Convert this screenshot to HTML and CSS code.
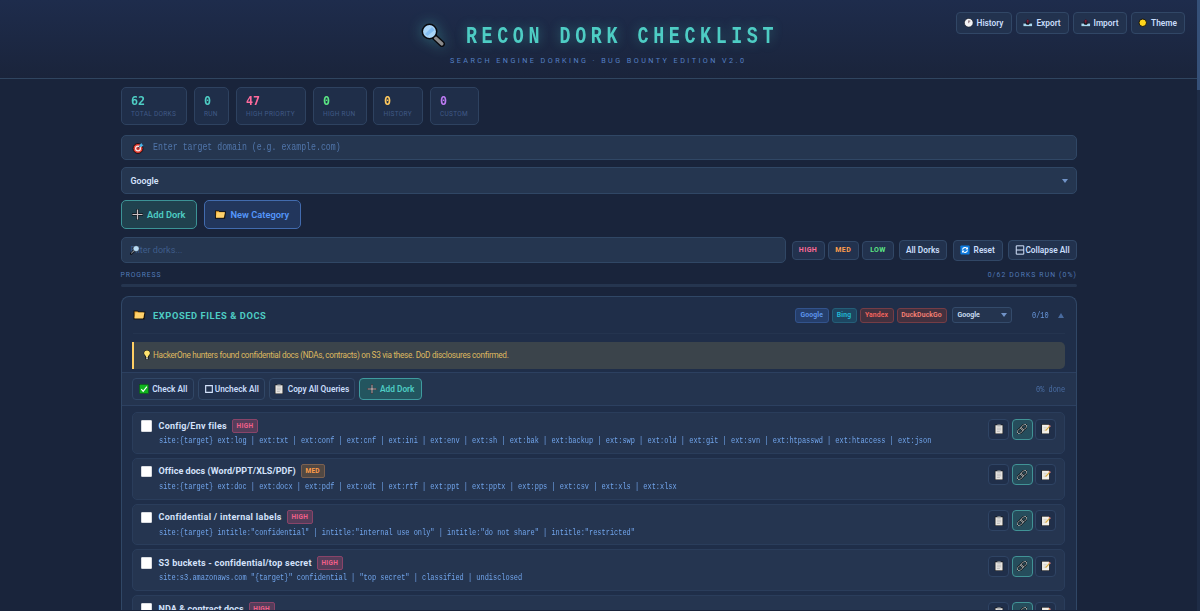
FILE: index.html
```html
<!DOCTYPE html>
<html lang="en">
<head>
<meta charset="utf-8">
<title>Recon Dork Checklist</title>
<link rel="stylesheet" href="styles.css">
</head>
<body>
<svg class="defs" aria-hidden="true">
  <symbol id="lens" viewBox="0 0 24 24"><path d="M13.500 14l7.500 7" stroke="#08090d" stroke-width="6" stroke-linecap="round"/><path d="M14.500 15l6.300 5.800" stroke="#8b8b8c" stroke-width="3.500" stroke-linecap="round"/><circle cx="8.500" cy="8.500" r="7.200" fill="#a9d5f7" stroke="#08090d" stroke-width="1.500"/><path d="M4 11l7-7 2.500 3-7 6z" fill="#83bdf0"/></symbol>
  <symbol id="lens-left" viewBox="0 0 24 24"><path d="M10 14l-7 7" stroke="#0b0e14" stroke-width="6" stroke-linecap="round"/><path d="M10 14l-6 6" stroke="#777e88" stroke-width="3" stroke-linecap="round"/><circle cx="15.500" cy="8.500" r="7.500" fill="#b9dcf5" stroke="#141a24" stroke-width="1"/></symbol>
  <symbol id="clock" viewBox="0 0 24 24"><circle cx="12" cy="12" r="11" fill="#f4f4f6" stroke="#10131c" stroke-width="1.500"/><path d="M12 13V6M12 8h4" stroke="#7a5f68" stroke-width="2.200" fill="none"/></symbol>
  <symbol id="tray" viewBox="0 0 24 24"><path d="M2 12h20l1 10H1z" fill="#10131c"/><path d="M1 14h6l2 3h6l2-3h6v7H1z" fill="#a9d8f2"/><path d="M12 3l5 6h-3v5h-4V9H7z" fill="#8a1f38" stroke="#16101c"/></symbol>
  <symbol id="sun" viewBox="0 0 24 24"><circle cx="12" cy="12" r="9.500" fill="#ffd51b" stroke="#15120c" stroke-width="2.500"/></symbol>
  <symbol id="target" viewBox="0 0 24 24"><circle cx="12" cy="13" r="10" fill="#e63c30" stroke="#1a1014" stroke-width="2"/><circle cx="12" cy="13" r="6" fill="#f7e9e9"/><circle cx="12" cy="13" r="3.500" fill="#d93a30"/><path d="M12 13L19 5" stroke="#17334d" stroke-width="2"/><path d="M15 6l4-4 1 3 3 1-4 4-4-1z" fill="#48b5e9"/></symbol>
  <symbol id="plus" viewBox="0 0 24 24"><path d="M12 0v24M0 12h24" stroke="#10131a" stroke-width="5"/><path d="M12 1v22M1 12h22" stroke="#cdc2c3" stroke-width="2.600"/></symbol>
  <symbol id="folder" viewBox="0 0 24 24"><path d="M0 3h8l2 2h14l-2 16H0z" fill="#17120c"/><path d="M2 5h6l2 2h10v11H2z" fill="#eda62f"/><path d="M4 7h18l-3 12H2z" fill="#ffd16b"/></symbol>
  <symbol id="reset" viewBox="0 0 24 24"><rect x="1" y="1" width="22" height="22" rx="2" fill="#0d7be0"/><path d="M6 11a6 6 0 0 1 11-2M18 13a6 6 0 0 1-11 2" fill="none" stroke="#fff" stroke-width="2.600"/><path d="M19 5v6h-6zM5 19v-6h6z" fill="#fff"/></symbol>
  <symbol id="collapse" viewBox="0 0 24 24"><path d="M3 2h18v20H3zM3 12h18" fill="none" stroke="#d4e2fb" stroke-width="2.400"/></symbol>
  <symbol id="bulb" viewBox="0 0 24 24"><path d="M12 0c-5 0-8 3-8 8 0 4 4 6 4 10v4l4 2 4-2v-4c0-4 4-6 4-10 0-5-3-8-8-8z" fill="#17150f"/><path d="M12 1c-4 0-7 3-7 7 0 4 5 5 5 10h4c0-5 5-6 5-10 0-4-3-7-7-7z" fill="#ffe36f"/><path d="M10 18h4v4h-4z" fill="#c8ccd2"/></symbol>
  <symbol id="check" viewBox="0 0 24 24"><rect x="1" y="1" width="22" height="22" fill="#10b51e" stroke="#073f0d" stroke-width="1"/><path d="M5.500 12.500l4.500 5 9-11" fill="none" stroke="#fff" stroke-width="2.800"/></symbol>
  <symbol id="box" viewBox="0 0 24 24"><path d="M4 4h16v16H4z" fill="none" stroke="#d4e2fb" stroke-width="2.800"/></symbol>
  <symbol id="clip" viewBox="0 0 24 24"><path d="M2 1h20v23H2z" fill="#17191d"/><path d="M3.500 3h17v19.500h-17z" fill="#e9e6e2"/><path d="M8 1h8v5H8z" fill="#aeb1b3"/><path d="M7 10h10M7 14h10M7 18h7" stroke="#a8a8aa" stroke-width="1.500"/></symbol>
  <symbol id="link" viewBox="0 0 24 24"><g transform="rotate(-45 12 12)" fill="none"><g stroke="#101318" stroke-width="5"><rect x="-2" y="7.500" width="16" height="9" rx="4.500"/><rect x="10" y="7.500" width="16" height="9" rx="4.500"/></g><g stroke="#b4bcbc" stroke-width="2"><rect x="-2" y="7.500" width="16" height="9" rx="4.500"/><rect x="10" y="7.500" width="16" height="9" rx="4.500"/></g></g></symbol>
  <symbol id="memo" viewBox="0 0 24 24"><path d="M1 0h20v24H1z" fill="#17191d"/><path d="M2.500 1.500h17v21h-17z" fill="#f2efe8"/><path d="M6 8h8M6 12h6M6 16h5" stroke="#c3c0ba" stroke-width="1.500"/><path d="M11 16L21 5" stroke="#d9ab42" stroke-width="3.200"/><path d="M19 3l4 3" stroke="#d87878" stroke-width="2.500"/></symbol>
</svg>

<header class="header">
  <div class="brand">
    <svg class="brand-icon"><use href="#lens"/></svg>
    <h1 class="title">RECON DORK CHECKLIST</h1>
  </div>
  <p class="subtitle">SEARCH ENGINE DORKING · BUG BOUNTY EDITION V2.0</p>
  <nav class="topnav">
    <button class="btn w-56"><svg class="ic"><use href="#clock"/></svg>History</button>
    <button class="btn w-53"><svg class="ic"><use href="#tray"/></svg>Export</button>
    <button class="btn w-54"><svg class="ic"><use href="#tray"/></svg>Import</button>
    <button class="btn w-54"><svg class="ic"><use href="#sun"/></svg>Theme</button>
  </nav>
</header>

<main class="page">
  <section class="stats">
    <div class="stat s1"><b>62</b><span>TOTAL DORKS</span></div>
    <div class="stat s2"><b>0</b><span>RUN</span></div>
    <div class="stat s3"><b>47</b><span>HIGH PRIORITY</span></div>
    <div class="stat s4"><b>0</b><span>HIGH RUN</span></div>
    <div class="stat s5"><b>0</b><span>HISTORY</span></div>
    <div class="stat s6"><b>0</b><span>CUSTOM</span></div>
  </section>

  <div class="field domain"><svg class="ic"><use href="#target"/></svg><span class="mono">Enter target domain (e.g. example.com)</span></div>
  <div class="field engine"><span>Google</span><i class="caret"></i></div>

  <div class="actions">
    <button class="big teal"><svg class="ic"><use href="#plus"/></svg>Add Dork</button>
    <button class="big blue"><svg class="ic"><use href="#folder"/></svg>New Category</button>
  </div>

  <div class="filters">
    <div class="field search"><svg class="search-icon"><use href="#lens-left"/></svg><span>Filter dorks...</span></div>
    <button class="btn level high">HIGH</button>
    <button class="btn level med">MED</button>
    <button class="btn level low">LOW</button>
    <button class="btn all">All Dorks</button>
    <button class="btn reset"><svg class="ic"><use href="#reset"/></svg>Reset</button>
    <button class="btn collapse"><svg class="ic"><use href="#collapse"/></svg>Collapse All</button>
  </div>

  <div class="progress-label"><span>PROGRESS</span><span class="count">0/62 DORKS RUN (0%)</span></div>
  <div class="progress"></div>

  <section class="card">
    <div class="card-head">
      <svg class="folder"><use href="#folder"/></svg>
      <h2>EXPOSED FILES &amp; DOCS</h2>
      <span class="tag google">Google</span>
      <span class="tag bing">Bing</span>
      <span class="tag yandex">Yandex</span>
      <span class="tag duck">DuckDuckGo</span>
      <div class="mini-select"><span>Google</span><i class="caret"></i></div>
      <span class="tally"><span class="mono">0/10</span></span>
      <i class="up"></i>
    </div>
    <div class="tip"><svg class="ic"><use href="#bulb"/></svg><span>HackerOne hunters found confidential docs (NDAs, contracts) on S3 via these. DoD disclosures confirmed.</span></div>
    <div class="toolbar">
      <button class="btn w-62"><svg class="ic"><use href="#check"/></svg>Check All</button>
      <button class="btn w-67 tight"><svg class="ic"><use href="#box"/></svg>Uncheck All</button>
      <button class="btn w-87"><svg class="ic"><use href="#clip"/></svg>Copy All Queries</button>
      <button class="btn w-63 add"><svg class="ic"><use href="#plus"/></svg>Add Dork</button>
      <span class="done"><span class="mono">0% done</span></span>
    </div>
    <div class="list">
      <article class="dork">
        <i class="checkbox"></i>
        <div class="info"><div class="name"><span class="n1">Config/Env files</span><em class="badge">HIGH</em></div><code class="mono">site:{target} ext:log | ext:txt | ext:conf | ext:cnf | ext:ini | ext:env | ext:sh | ext:bak | ext:backup | ext:swp | ext:old | ext:git | ext:svn | ext:htpasswd | ext:htaccess | ext:json</code></div>
        <div class="tools"><button><svg><use href="#clip"/></svg></button><button class="on"><svg><use href="#link"/></svg></button><button><svg><use href="#memo"/></svg></button></div>
      </article>
      <article class="dork">
        <i class="checkbox"></i>
        <div class="info"><div class="name"><span class="n2">Office docs (Word/PPT/XLS/PDF)</span><em class="badge medium">MED</em></div><code class="mono">site:{target} ext:doc | ext:docx | ext:pdf | ext:odt | ext:rtf | ext:ppt | ext:pptx | ext:pps | ext:csv | ext:xls | ext:xlsx</code></div>
        <div class="tools"><button><svg><use href="#clip"/></svg></button><button class="on"><svg><use href="#link"/></svg></button><button><svg><use href="#memo"/></svg></button></div>
      </article>
      <article class="dork">
        <i class="checkbox"></i>
        <div class="info"><div class="name"><span class="n3">Confidential / internal labels</span><em class="badge">HIGH</em></div><code class="mono">site:{target} intitle:"confidential" | intitle:"internal use only" | intitle:"do not share" | intitle:"restricted"</code></div>
        <div class="tools"><button><svg><use href="#clip"/></svg></button><button class="on"><svg><use href="#link"/></svg></button><button><svg><use href="#memo"/></svg></button></div>
      </article>
      <article class="dork">
        <i class="checkbox"></i>
        <div class="info"><div class="name"><span class="n4">S3 buckets - confidential/top secret</span><em class="badge">HIGH</em></div><code class="mono">site:s3.amazonaws.com "{target}" confidential | "top secret" | classified | undisclosed</code></div>
        <div class="tools"><button><svg><use href="#clip"/></svg></button><button class="on"><svg><use href="#link"/></svg></button><button><svg><use href="#memo"/></svg></button></div>
      </article>
      <article class="dork">
        <i class="checkbox"></i>
        <div class="info"><div class="name"><span class="n5">NDA &amp; contract docs</span><em class="badge">HIGH</em></div></div>
        <div class="tools"><button><svg><use href="#clip"/></svg></button><button class="on"><svg><use href="#link"/></svg></button><button><svg><use href="#memo"/></svg></button></div>
      </article>
    </div>
  </section>
</main>
<div class="scrollbar"><i></i></div>
</body>
</html>
```
FILE: styles.css
```css
* { box-sizing: border-box; margin: 0; padding: 0; }
html, body { height: 611px; overflow: hidden; }
body { background: #19243b; color: #d4e2fb; font-family: Roboto, "Liberation Sans", sans-serif; font-size: 8.500px; position: relative; }
.defs { position: absolute; width: 0; height: 0; }
svg { fill: none; flex: none; overflow: visible; }
i { display: block; flex: none; }
button { font: inherit; color: inherit; background: none; white-space: nowrap; }
.mono { display: inline-block; font-family: "Liberation Mono", monospace; font-size: 9px; transform: scaleX(.773); transform-origin: 0 50%; white-space: pre; }

.header { height: 79px; padding-top: 21px; border-bottom: 1px solid #304560; background: linear-gradient(#1e2c4c, #1a243b); position: relative; }
.brand { display: flex; align-items: center; height: 28px; padding-left: 421px; }
.brand-icon { width: 24px; height: 24px; margin-right: 20.500px; filter: drop-shadow(0 0 7px rgba(78, 205, 196, .4)); }
.title { padding-top: 2px; font: bold 24.500px "Liberation Mono", monospace; color: #4ecdc4; letter-spacing: 6.100px; transform: scaleX(.75); transform-origin: 0 50%; white-space: nowrap; text-shadow: 0 0 14px rgba(78, 205, 196, .4); }
.subtitle { padding-left: 450px; height: 22px; line-height: 23px; font-size: 7.200px; letter-spacing: 2.460px; color: #5580c4; white-space: nowrap; }
.topnav { position: absolute; top: 12px; right: 15.500px; display: flex; gap: 4px; }

.btn { display: flex; align-items: center; justify-content: center; gap: 3.500px; height: 22px; border: 1px solid #314766; border-radius: 4px; background: #22324e; color: #c9ddfa; font-size: 8.300px; font-weight: 600; }
.ic { width: 10px; height: 10px; }
.topnav .ic { width: 9.500px; height: 9.500px; }
.w-56 { width: 56px; } .w-53 { width: 53px; } .w-54 { width: 54px; }
.w-62 { width: 62px; } .w-67 { width: 66.500px; } .w-87 { width: 86.500px; } .w-63 { width: 63px; }

.page { padding: 8px 123px 0 120.500px; }
.stats { display: flex; gap: 6.500px; height: 38px; }
.stat { border: 1px solid #2e4260; border-radius: 5px; background: #1f2e49; padding: 4.500px 0 0 9.500px; display: flex; flex-direction: column; white-space: nowrap; }
.stat b { font: bold 13px/15px "DejaVu Sans Mono", monospace; transform: scaleX(.9); transform-origin: 0 50%; }
.stat span { font-size: 6.500px; line-height: 12px; color: #3f5986; letter-spacing: .3px; }
.s1 { width: 66.500px; color: #4ecdc4; } .s2 { width: 35.500px; color: #4ecdc4; }
.s3 { width: 70.500px; color: #ff6b9d; } .s4 { width: 54px; color: #5be584; }
.s5 { width: 50px; color: #ffc95e; } .s6 { width: 49px; color: #bc7bf3; }

.field { display: flex; align-items: center; border: 1px solid #304765; border-radius: 5px; background: #253650; }
.domain { height: 25px; margin-top: 10px; padding-left: 10px; color: #5075aa; }
.domain .ic { width: 12px; height: 12px; margin-right: 9.500px; }
.domain .mono { font-size: 10px; transform: scaleX(.823); }
.engine { height: 27px; margin-top: 7px; padding: 0 8px 0 9px; justify-content: space-between; font-weight: 600; font-size: 8.800px; }
.caret { border: 3px solid transparent; border-top: 4px solid #7193c7; border-bottom: 0; }

.actions { display: flex; gap: 6.500px; margin-top: 6px; }
.big { display: flex; align-items: center; justify-content: center; gap: 4px; height: 29px; border-radius: 5px; font-size: 9.300px; font-weight: 600; }
.big .ic { width: 11px; height: 11px; }
.teal { width: 76.500px; border: 1px solid #3c9396; background: #20414e; color: #4ecdc4; }
.blue { width: 97.500px; border: 1px solid #426bae; background: #22365c; color: #5596fb; }

.filters { display: flex; align-items: center; margin-top: 8px; height: 26px; }
.search { width: 665.500px; height: 26px; padding-left: 9px; margin-right: 5.500px; color: #3f5d8b; font-size: 9px; position: relative; }
.search-icon { position: absolute; left: 8.500px; top: 7px; width: 9.500px; height: 10px; }
.level { width: 33px; height: 19px; margin-right: 3px; font-size: 7px; font-weight: 700; letter-spacing: .4px; }
.high { color: #fb6a96; } .med { width: 31.500px; color: #ff9f4d; } .low { width: 32px; color: #5be584; margin-right: 5px; }
.all { width: 47.500px; height: 20px; margin-right: 6px; }
.reset { width: 50px; height: 21px; margin-right: 5.500px; }
.collapse { flex: 1; height: 20px; gap: 0; }

.progress-label { display: flex; justify-content: space-between; margin-top: 5px; height: 14px; line-height: 14px; font-size: 6.800px; letter-spacing: 1.130px; color: #527ab7; }
.progress-label span:first-child { letter-spacing: .880px; }
.progress { height: 3px; margin-top: 2px; border-radius: 2px; background: #25354f; }

.card { margin-top: 9px; border: 1px solid #304766; border-bottom: 0; border-radius: 8px 8px 0 0; background: #1f2e49; height: 314px; overflow: hidden; }
.card-head { display: flex; align-items: center; height: 37px; margin: 0 11px; border-bottom: 1px solid #24344f; }
.folder { width: 13px; height: 12px; margin-right: 7.500px; }
.card-head h2 { margin-right: auto; font-size: 9.300px; font-weight: 700; letter-spacing: .590px; color: #4ecdc4; white-space: nowrap; }
.tag { height: 15px; line-height: 13px; text-align: center; border: 1px solid; border-radius: 3px; margin-right: 3px; font-size: 6.800px; font-weight: 600; letter-spacing: .150px; white-space: nowrap; }
.google { width: 33.500px; color: #609bf4; background: #253e6b; border-color: #32538c; }
.bing { width: 25px; color: #22bfda; background: #1d4661; border-color: #245e78; }
.yandex { width: 34px; color: #f9665e; background: #43313f; border-color: #753d46; }
.duck { width: 50px; color: #fb8275; background: #43313f; border-color: #753d46; margin-right: 5px; }
.mini-select { display: flex; align-items: center; justify-content: space-between; width: 60.500px; height: 16px; padding: 0 4px 0 5px; border: 1px solid #344b6b; border-radius: 3px; background: #24344f; font-size: 7px; font-weight: 600; }
.tally { width: 25.500px; margin-left: 20px; color: #6796da; }
.up { border: 3px solid transparent; border-bottom: 5px solid #486a9e; border-top: 0; margin-right: 1.500px; }
.tip { display: flex; align-items: center; gap: 1.500px; height: 27px; margin: 8px 11px 0 10.500px; padding: 0 0 2px 7.500px; border-left: 2px solid #ffcf64; border-radius: 0 5px 5px 0; background: #3b444b; color: #dfb960; font-size: 8.200px; letter-spacing: -.3px; white-space: nowrap; }
.toolbar { display: flex; align-items: center; gap: 4px; height: 34px; margin-top: 3px; padding: 0 11px 0 10.500px; border: solid #2c4060; border-width: 1px 0; background: #24344f; }
.tight { gap: 1px; }
.add { border-color: #3f9b9f; background: #23555f; color: #4ecdc4; }
.done { width: 29.500px; margin-left: auto; color: #4a6ea5; }

.list { display: flex; flex-direction: column; gap: 4px; padding: 6px 11px 6px 10.500px; }
.dork { display: flex; flex: none; height: 41.800px; border: 1px solid #2a3d5b; border-radius: 5px; background: #253550; padding: 0 8px 0 7.500px; }
.checkbox { width: 11.500px; height: 11.500px; margin: 7px 6.500px 0 0; background: #fff; border: 1px solid #d8dbe0; border-radius: 1px; }
.info { flex: 1; min-width: 0; padding-top: 5.500px; }
.name { display: flex; align-items: center; gap: 5px; height: 14px; font-size: 9px; font-weight: 700; white-space: nowrap; }
.n1 { letter-spacing: .250px; } .n2 { letter-spacing: .040px; } .n3 { letter-spacing: .300px; } .n4 { letter-spacing: .230px; } .n5 { letter-spacing: .070px; }
.info code { margin-top: 2.500px; line-height: 12px; color: #71a5ec; }
.badge { font-style: normal; width: 26px; height: 14px; line-height: 12px; text-align: center; border: 1px solid #894469; border-radius: 2px; background: #553d5a; color: #f0608a; font-size: 6.500px; letter-spacing: .3px; }
.medium { width: 24px; border-color: #7b6050; background: #514843; color: #ff9d49; }
.tools { display: flex; gap: 2.500px; padding-top: 5.500px; }
.tools button { display: flex; align-items: center; justify-content: center; width: 21px; height: 21px; border: 1px solid #2f4464; border-radius: 4px; background: #202f4a; }
.tools .on { border-color: #419396; background: #264d5c; }
.tools svg { width: 10px; height: 10px; }
.scrollbar { position: fixed; top: 0; right: 0; width: 3px; height: 611px; background: #1e2c46; }
.scrollbar i { height: 90px; background: #355078; }
```
